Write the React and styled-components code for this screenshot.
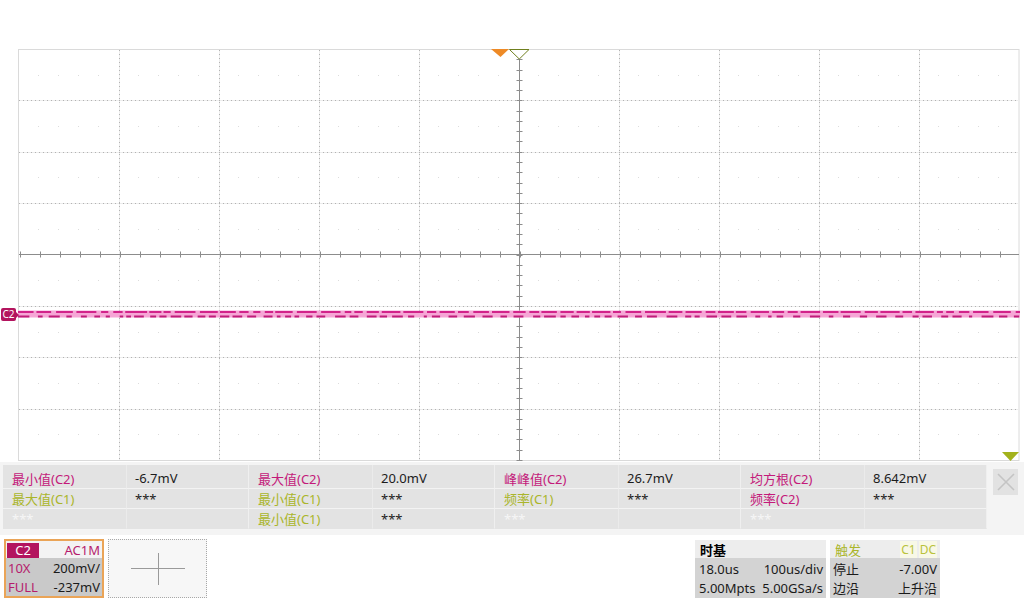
import React from 'react';
import styled, { createGlobalStyle } from 'styled-components';

const Global = createGlobalStyle`
  html, body { margin: 0; padding: 0; background: #ffffff; }
  body { font-family: "Noto Sans", "Noto Sans CJK SC", sans-serif; }
`;

const PINK = '#c4197a';
const OLIVE = '#aab52a';

const Page = styled.div`
  width: 1024px;
  height: 600px;
  display: flex;
  flex-direction: column;
  background: #ffffff;
  overflow: hidden;
`;

const TopGap = styled.div`
  height: 49px;
  flex: none;
`;

const Screen = styled.div`
  position: relative;
  height: 413px;
  flex: none;
  padding-left: 18px;
`;

const GridSvg = styled.svg`
  display: block;
`;

const ChannelMarker = styled.div`
  position: absolute;
  left: 1px;
  top: 259px;
  width: 15px;
  height: 13px;
  background: #b3145e;
  color: #fff;
  font-size: 10px;
  line-height: 13px;
  text-align: center;
  border-radius: 2px;
  &::after {
    content: '';
    position: absolute;
    right: -3px;
    top: 4px;
    border-left: 3px solid #b3145e;
    border-top: 3px solid transparent;
    border-bottom: 3px solid transparent;
  }
`;

const Marker = styled.svg`
  position: absolute;
  left: ${p => p.$x}px;
  top: ${p => p.$y}px;
`;

const MeasureArea = styled.div`
  height: 73px;
  flex: none;
  box-sizing: border-box;
  padding: 3px 3px 0 3px;
  display: flex;
  gap: 6px;
  background: #f4f4f4;
`;

const Table = styled.div`
  display: grid;
  grid-template-columns: repeat(4, 124px 122px);
  grid-template-rows: 24px 20px 20px;
  width: 984px;
  height: 64px;
  background: #e3e3e3;
`;

const Cell = styled.div`
  display: flex;
  align-items: center;
  box-sizing: border-box;
  padding-left: ${p => (p.$value ? 8 : 9)}px;
  padding-top: ${p => (p.$first ? 3 : 0)}px;
  font-size: 13px;
  white-space: nowrap;
  color: ${p => (p.$tone === 'pink' ? PINK : p.$tone === 'olive' ? OLIVE : p.$tone === 'ghost' ? '#f6f6f6' : '#1c1c1c')};
  border-bottom: 1px solid ${p => (p.$last ? 'transparent' : '#f3f3f3')};
  border-right: 1px solid ${p => (p.$value ? '#efefef' : '#ebebeb')};
`;

const CloseBtn = styled.div`
  width: 25px;
  height: 26px;
  margin-top: 4px;
  background: #e2e2e2;
  display: flex;
  align-items: center;
  justify-content: center;
`;

const BottomBar = styled.div`
  flex: 1;
  display: flex;
  gap: 4px;
  box-sizing: border-box;
  padding: 4px 0 3px 4px;
  background: #ffffff;
  font-size: 13px;
`;

const ChannelBox = styled.div`
  width: 100px;
  box-sizing: border-box;
  border: 2px solid #eaa457;
  display: flex;
  flex-direction: column;
  background: #c9c9c9;
`;

const ChanHead = styled.div`
  height: 17px;
  display: flex;
  align-items: center;
  justify-content: space-between;
  background: #f3f3f3;
  padding: 1px 2px 0 1px;
  box-sizing: border-box;
`;

const ChanBadge = styled.div`
  width: 32px;
  height: 15px;
  background: #b3145e;
  color: #fff;
  font-size: 13px;
  line-height: 15px;
  text-align: center;
`;

const BoxRow = styled.div`
  flex: 1;
  display: flex;
  align-items: center;
  justify-content: space-between;
  padding: 0 ${p => p.$pr || 2}px 0 ${p => p.$pl || 2}px;
  color: #1a1a1a;
  white-space: nowrap;
`;

const Tone = styled.span`
  color: ${p => (p.$tone === 'pink' ? '#b51c6c' : p.$tone === 'olive' ? OLIVE : 'inherit')};
  font-weight: ${p => (p.$bold ? 600 : 400)};
`;

const CrossBox = styled.div`
  width: 99px;
  box-sizing: border-box;
  border: 1px dotted #a8a8a8;
  background: #f7f7f7;
  display: flex;
  align-items: center;
  justify-content: center;
`;

const Spacer = styled.div`
  flex: 1;
`;

const InfoBox = styled.div`
  width: ${p => p.$w}px;
  display: flex;
  flex-direction: column;
  margin-top: 1px;
  margin-right: ${p => p.$mr || 0}px;
`;

const InfoHead = styled.div`
  height: 18px;
  display: flex;
  align-items: center;
  justify-content: space-between;
  padding: 0 3px 0 5px;
  background: #ededed;
`;

const InfoBody = styled.div`
  flex: 1;
  display: flex;
  flex-direction: column;
  background: #d3d3d3;
  padding: 1px 0 1px 0;
`;

const Tag = styled.span`
  color: #b9c23a;
  background: #f8f8e6;
  padding: 0 1px;
  margin-left: 2px;
  font-size: 12px;
`;

function rng(seed) {
  let s = seed;
  return () => {
    s = (s * 1103515245 + 12345) & 0x7fffffff;
    return s / 0x7fffffff;
  };
}

function makeSegs(seed, minLen, maxLen, minGap, maxGap) {
  const r = rng(seed);
  const segs = [];
  let x = 0;
  while (x < 1002) {
    const len = minLen + r() * (maxLen - minLen);
    segs.push([x, Math.min(1002, x + len)]);
    x += len + minGap + r() * (maxGap - minGap);
  }
  return segs;
}

const topSegs = makeSegs(7, 6, 22, 2, 5);
const botSegs = makeSegs(31, 3, 12, 3, 10);

const W = 1002;
const H = 412;
const DX = 100.1;
const DY = 51.375;

function Grid() {
  const verts = [];
  for (let i = 1; i < 10; i++) {
    if (i === 5) continue;
    verts.push(Math.round(0.5 + DX * i) + 0.5);
  }
  const hors = [];
  for (let i = 1; i < 8; i++) {
    if (i === 4) continue;
    hors.push(Math.round(DY * i) + 0.5);
  }
  const subDots = [];
  for (let j = 0; j < 8; j++) {
    const y = Math.round(DY * j + DY / 2) + 0.5;
    for (let x = 20; x < W; x += 20) {
      if (x % 100 === 0) continue;
      subDots.push([x, y]);
    }
  }
  const cx = 501.5;
  const cy = 205.5;
  const hTicks = [];
  for (let x = cx - 500; x <= cx + 500; x += 20) hTicks.push(Math.round(x) + 0.5);
  const vTicks = [];
  for (let k = -20; k <= 20; k++) vTicks.push(Math.round(cy + k * (DY / 5)) + 0.5);

  return (
    <GridSvg width={W} height={413} viewBox={`0 0 ${W} 413`}>
      <rect x="0.5" y="0.5" width={W - 1.5} height={H - 1} fill="none" stroke="#dadada" />
      {verts.map(x => (
        <g key={'v' + x}>
          <line x1={x} y1={1} x2={x} y2={H - 1} stroke="#ededed" />
          <line x1={x} y1={1} x2={x} y2={H - 1} stroke="#b2b2b2" strokeDasharray="1 3" />
        </g>
      ))}
      {hors.map(y => (
        <g key={'h' + y}>
          <line x1={1} y1={y} x2={W - 1} y2={y} stroke="#ededed" />
          <line x1={1} y1={y} x2={W - 1} y2={y} stroke="#b2b2b2" strokeDasharray="1 3" />
        </g>
      ))}
      {subDots.map(([x, y]) => (
        <rect key={'d' + x + '_' + y} x={x} y={y - 0.5} width="1" height="1" fill="#dcdcdc" />
      ))}
      <line x1={1} y1={cy} x2={W - 1} y2={cy} stroke="#8c8c8c" />
      <line x1={cx} y1={1} x2={cx} y2={H - 1} stroke="#8c8c8c" />
      {hTicks.map(x => (
        <line key={'ht' + x} x1={x} y1={cy - 3} x2={x} y2={cy + 3} stroke="#8c8c8c" />
      ))}
      {vTicks.map(y => (
        <line key={'vt' + y} x1={cx - 3} y1={y} x2={cx + 3} y2={y} stroke="#8c8c8c" />
      ))}
      <rect x="0" y="261.5" width={W} height="7" fill="#f6a6d6" />
      {topSegs.map(([a, b], i) => (
        <line key={'t' + i} x1={a} y1={263} x2={b} y2={263} stroke="#d2238a" strokeWidth="2" />
      ))}
      {botSegs.map(([a, b], i) => (
        <line key={'b' + i} x1={a} y1={267.5} x2={b} y2={267.5} stroke="#c01d7a" strokeWidth="2" />
      ))}
    </GridSvg>
  );
}

const rows = [
  [
    { l: '最小值(C2)', t: 'pink', v: '-6.7mV' },
    { l: '最大值(C2)', t: 'pink', v: '20.0mV' },
    { l: '峰峰值(C2)', t: 'pink', v: '26.7mV' },
    { l: '均方根(C2)', t: 'pink', v: '8.642mV' },
  ],
  [
    { l: '最大值(C1)', t: 'olive', v: '***' },
    { l: '最小值(C1)', t: 'olive', v: '***' },
    { l: '频率(C1)', t: 'olive', v: '***' },
    { l: '频率(C2)', t: 'pink', v: '***' },
  ],
  [
    { l: '***', t: 'ghost', v: '' },
    { l: '最小值(C1)', t: 'olive', v: '***' },
    { l: '***', t: 'ghost', v: '' },
    { l: '***', t: 'ghost', v: '' },
  ],
];

export default function App() {
  return (
    <Page>
      <Global />
      <TopGap />
      <Screen>
        <Grid />
        <ChannelMarker>C2</ChannelMarker>
        <Marker $x={491} $y={0} width="19" height="9" viewBox="0 0 19 9">
          <polygon points="0,0 18,0 9.5,8" fill="#ee8a26" />
        </Marker>
        <Marker $x={509} $y={0} width="21" height="11" viewBox="0 0 21 11">
          <polygon points="0.5,0.5 20,0.5 10.3,10" fill="#fff" stroke="#6f7f1e" strokeWidth="1" />
        </Marker>
        <Marker $x={1002} $y={403} width="18" height="10" viewBox="0 0 18 10">
          <polygon points="0,0 17,0 8.5,9" fill="#a3b21c" />
        </Marker>
      </Screen>
      <MeasureArea>
        <Table>
          {rows.map((row, ri) =>
            row.map((c, ci) => (
              <React.Fragment key={ri + '_' + ci}>
                <Cell $tone={c.t} $first={ri === 0} $last={ri === 2}>{c.l}</Cell>
                <Cell $value $first={ri === 0} $last={ri === 2}>{c.v}</Cell>
              </React.Fragment>
            ))
          )}
        </Table>
        <CloseBtn>
          <svg width="20" height="20" viewBox="0 0 20 20">
            <path d="M2 2 L18 18 M18 2 L2 18" stroke="#c4c4c4" strokeWidth="1.6" />
          </svg>
        </CloseBtn>
      </MeasureArea>
      <BottomBar>
        <ChannelBox>
          <ChanHead>
            <ChanBadge>C2</ChanBadge>
            <Tone $tone="pink">AC1M</Tone>
          </ChanHead>
          <BoxRow>
            <Tone $tone="pink">10X</Tone>
            <span>200mV/</span>
          </BoxRow>
          <BoxRow>
            <Tone $tone="pink">FULL</Tone>
            <span>-237mV</span>
          </BoxRow>
        </ChannelBox>
        <CrossBox>
          <svg width="54" height="32" viewBox="0 0 54 32">
            <path d="M0 15.5 H54 M27.5 0 V32" stroke="#9a9a9a" strokeWidth="1" />
          </svg>
        </CrossBox>
        <Spacer />
        <InfoBox $w={131}>
          <InfoHead>
            <Tone $bold>时基</Tone>
          </InfoHead>
          <InfoBody>
            <BoxRow $pl={4} $pr={3}>
              <span>18.0us</span>
              <span>100us/div</span>
            </BoxRow>
            <BoxRow $pl={4} $pr={3}>
              <span>5.00Mpts</span>
              <span>5.00GSa/s</span>
            </BoxRow>
          </InfoBody>
        </InfoBox>
        <InfoBox $w={110} $mr={84}>
          <InfoHead>
            <Tone $tone="olive">触发</Tone>
            <span>
              <Tag>C1</Tag>
              <Tag>DC</Tag>
            </span>
          </InfoHead>
          <InfoBody>
            <BoxRow $pl={3} $pr={3}>
              <span>停止</span>
              <span>-7.00V</span>
            </BoxRow>
            <BoxRow $pl={3} $pr={3}>
              <span>边沿</span>
              <span>上升沿</span>
            </BoxRow>
          </InfoBody>
        </InfoBox>
      </BottomBar>
    </Page>
  );
}
